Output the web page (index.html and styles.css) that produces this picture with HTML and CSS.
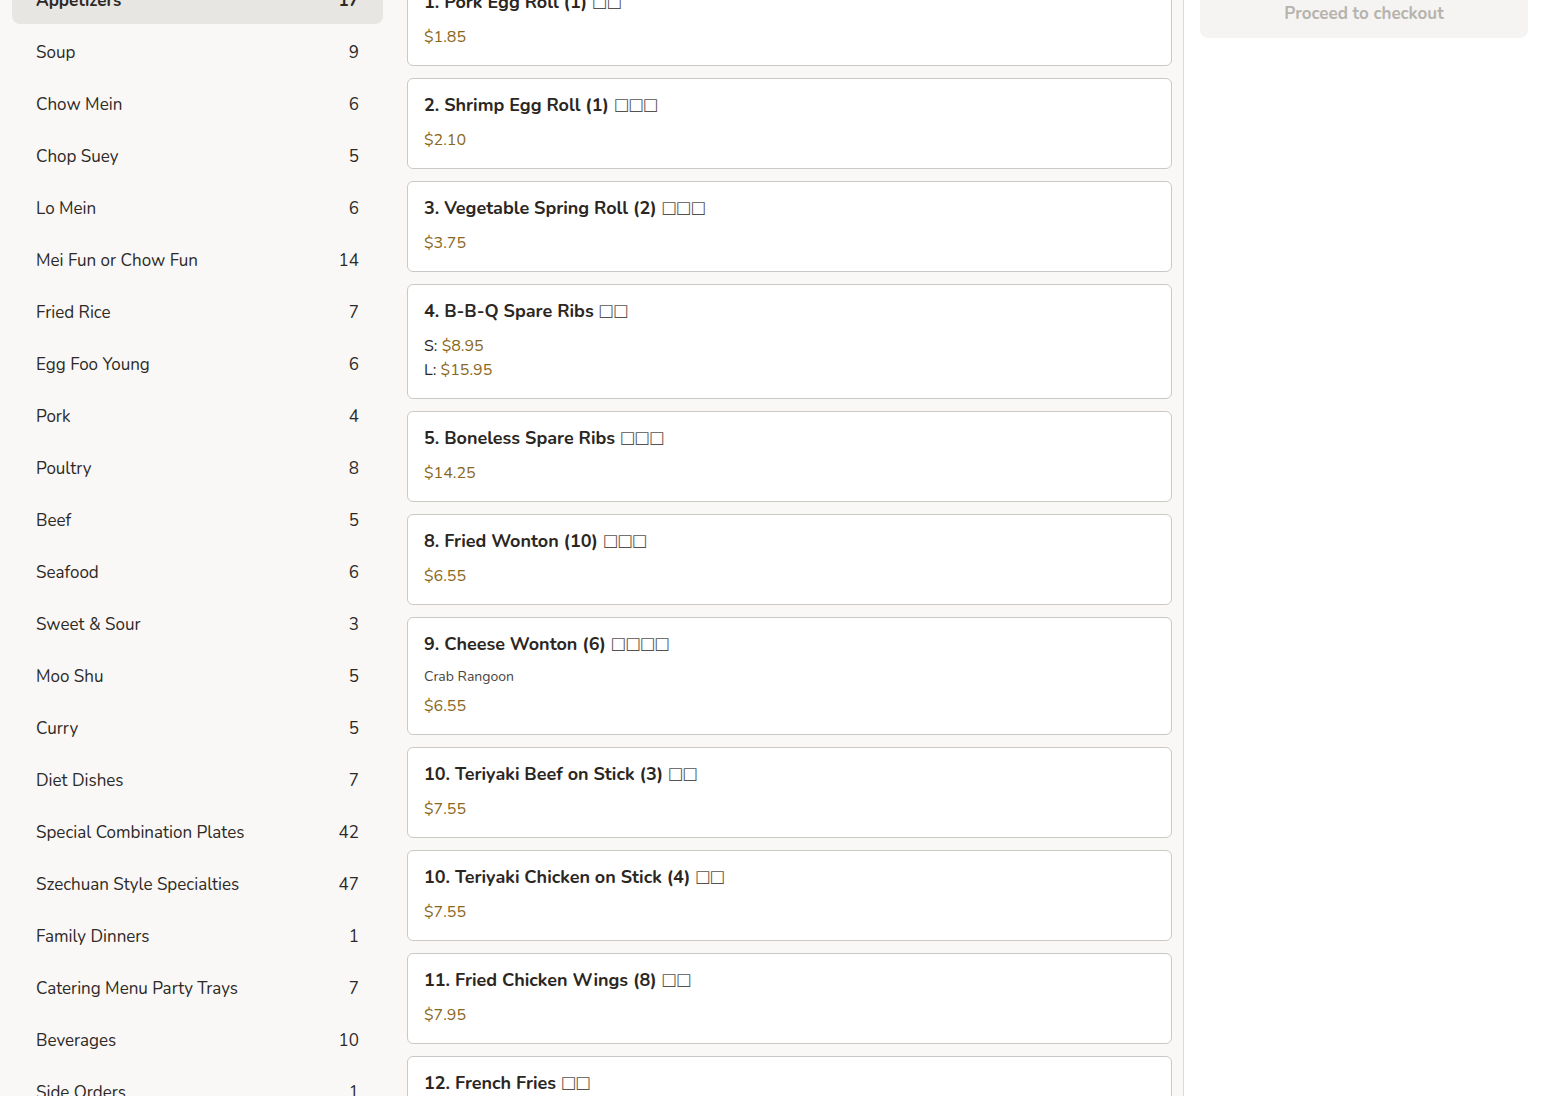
FILE: index.html
```html
<!DOCTYPE html>
<html lang="en">
<head>
<meta charset="utf-8">
<title>Menu</title>
<link rel="stylesheet" href="styles.css">
</head>
<body>
<div class="layout">
  <aside class="sidebar">
    <ul class="cats">
      <li class="cat active"><span>Appetizers</span><span>17</span></li>
      <li class="cat"><span>Soup</span><span>9</span></li>
      <li class="cat"><span>Chow Mein</span><span>6</span></li>
      <li class="cat"><span>Chop Suey</span><span>5</span></li>
      <li class="cat"><span>Lo Mein</span><span>6</span></li>
      <li class="cat"><span>Mei Fun or Chow Fun</span><span>14</span></li>
      <li class="cat"><span>Fried Rice</span><span>7</span></li>
      <li class="cat"><span>Egg Foo Young</span><span>6</span></li>
      <li class="cat"><span>Pork</span><span>4</span></li>
      <li class="cat"><span>Poultry</span><span>8</span></li>
      <li class="cat"><span>Beef</span><span>5</span></li>
      <li class="cat"><span>Seafood</span><span>6</span></li>
      <li class="cat"><span>Sweet &amp; Sour</span><span>3</span></li>
      <li class="cat"><span>Moo Shu</span><span>5</span></li>
      <li class="cat"><span>Curry</span><span>5</span></li>
      <li class="cat"><span>Diet Dishes</span><span>7</span></li>
      <li class="cat"><span>Special Combination Plates</span><span>42</span></li>
      <li class="cat"><span>Szechuan Style Specialties</span><span>47</span></li>
      <li class="cat"><span>Family Dinners</span><span>1</span></li>
      <li class="cat"><span>Catering Menu Party Trays</span><span>7</span></li>
      <li class="cat"><span>Beverages</span><span>10</span></li>
      <li class="cat"><span>Side Orders</span><span>1</span></li>
    </ul>
  </aside>
  <main class="menu">
    <div class="card"><h3 class="title">1. Pork Egg Roll (1) <span class="zh">□□</span></h3><div class="price">$1.85</div></div>
    <div class="card"><h3 class="title">2. Shrimp Egg Roll (1) <span class="zh">□□□</span></h3><div class="price">$2.10</div></div>
    <div class="card"><h3 class="title">3. Vegetable Spring Roll (2) <span class="zh">□□□</span></h3><div class="price">$3.75</div></div>
    <div class="card"><h3 class="title">4. B-B-Q Spare Ribs <span class="zh">□□</span></h3><div class="price"><span class="size">S: </span>$8.95</div><div class="price"><span class="size">L: </span>$15.95</div></div>
    <div class="card"><h3 class="title">5. Boneless Spare Ribs <span class="zh">□□□</span></h3><div class="price">$14.25</div></div>
    <div class="card"><h3 class="title">8. Fried Wonton (10) <span class="zh">□□□</span></h3><div class="price">$6.55</div></div>
    <div class="card"><h3 class="title">9. Cheese Wonton (6) <span class="zh">□□□□</span></h3><p class="desc">Crab Rangoon</p><div class="price">$6.55</div></div>
    <div class="card"><h3 class="title">10. Teriyaki Beef on Stick (3) <span class="zh">□□</span></h3><div class="price">$7.55</div></div>
    <div class="card"><h3 class="title">10. Teriyaki Chicken on Stick (4) <span class="zh">□□</span></h3><div class="price">$7.55</div></div>
    <div class="card"><h3 class="title">11. Fried Chicken Wings (8) <span class="zh">□□</span></h3><div class="price">$7.95</div></div>
    <div class="card"><h3 class="title">12. French Fries <span class="zh">□□</span></h3><div class="price">$3.25</div></div>
  </main>
  <aside class="cart">
    <button class="checkout" type="button">Proceed to checkout</button>
  </aside>
</div>
</body>
</html>
```
FILE: styles.css
```css
* { box-sizing: border-box; }
html, body { margin: 0; padding: 0; }
body {
  background: #f9f8f6;
  font-family: "Nunito", "Lato", "Noto Sans", sans-serif;
  color: #2b2622;
  overflow: hidden;
  height: 1096px;
}
.layout {
  display: flex;
  align-items: stretch;
  margin-top: -26px;
  min-height: 1200px;
}
.sidebar {
  width: 383px;
  flex: none;
  padding-left: 12px;
  padding-top: 2px;
}
.cats {
  list-style: none;
  margin: 0;
  padding: 0;
  display: flex;
  flex-direction: column;
  gap: 4px;
}
.cat {
  height: 48px;
  display: flex;
  align-items: center;
  justify-content: space-between;
  padding: 0 24px;
  font-size: 17px;
  border-radius: 8px;
  color: #2d2926;
}
.cat.active {
  background: #e7e6e3;
  font-weight: 700;
}
.menu {
  flex: none;
  width: 777px;
  margin-left: 24px;
  padding-right: 11px;
  border-right: 1px solid #dcdad6;
  display: flex;
  flex-direction: column;
  gap: 12px;
  padding-top: 1px;
}
.card {
  background: #fff;
  border: 1px solid #cbc9c5;
  border-radius: 6px;
  padding: 15px 16px 16px;
}
.title {
  margin: 0 0 11px;
  font-size: 18px;
  line-height: 23px;
  height: 23px;
  font-weight: 700;
  color: #2b2622;
}
.zh {
  font-family: "DejaVu Sans", sans-serif;
  font-size: 16.5px;
  line-height: 1;
  font-weight: 400;
  color: #56524e;
  letter-spacing: -1px;
  position: relative;
  top: -1px;
}
.desc {
  margin: 0 0 7px;
  font-size: 14px;
  line-height: 20px;
  color: #4a4540;
}
.price {
  font-size: 16px;
  line-height: 24px;
  color: #8a6720;
}
.size { color: #2b2622; }
.cart {
  flex: 1;
  background: #fff;
  padding: 0 16px;
}
.checkout {
  display: block;
  width: 100%;
  height: 64px;
  padding: 14px 0 0;
  border: none;
  border-radius: 8px;
  background: #f5f4f2;
  color: #b6b3ad;
  font-family: inherit;
  font-size: 17px;
  font-weight: 700;
}
```
